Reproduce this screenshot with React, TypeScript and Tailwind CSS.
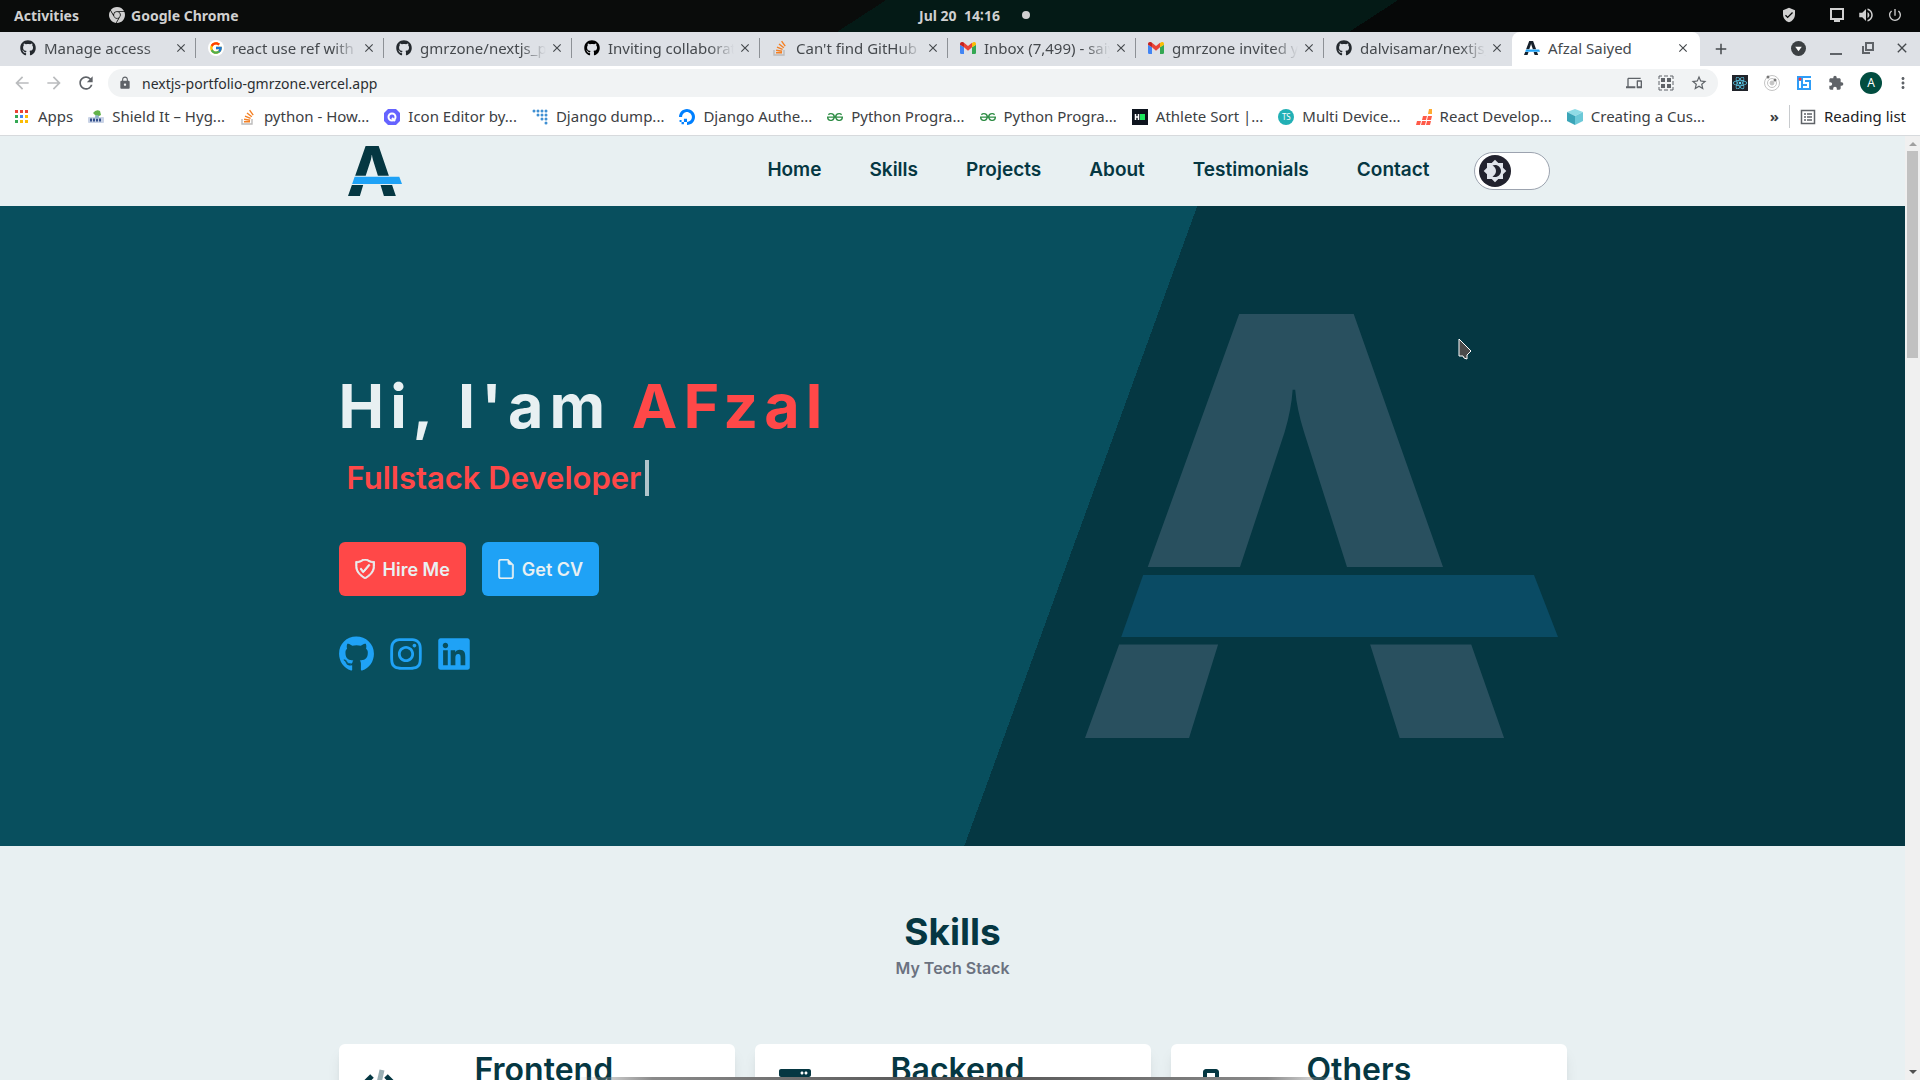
import React from "react";
import { FaGithub, FaInstagram, FaLinkedin, FaReact, FaServer, FaToolbox } from "react-icons/fa";
import { FcGoogle } from "react-icons/fc";
import { BsFileEarmark, BsGrid3X3GapFill } from "react-icons/bs";
import { VscWorkspaceTrusted } from "react-icons/vsc";
import { SiGooglechrome, SiDigitalocean, SiGeeksforgeeks } from "react-icons/si";
import {
  MdArrowBack, MdArrowForward, MdRefresh, MdLock, MdDevices, MdStarOutline, MdExtension, MdMoreVert,
  MdClose, MdAdd, MdVolumeUp, MdVerifiedUser, MdBrightness4, MdPowerSettingsNew,
} from "react-icons/md";

const ui = "[font-family:'Noto_Sans',sans-serif]";
const site = "[font-family:'Inter',sans-serif]";

function Logo({ className, ink, bar }: { className: string; ink: string; bar: string }) {
  return (
    <svg viewBox="346 270 1123 1007" preserveAspectRatio="none" className={className} aria-hidden="true">
      <path
        fill={ink}
        d="M712 270H984L1196 871H968L866 550Q849 497 845 450H839Q836 497 820 550L714 871H495ZM427 1055H662L593 1277H346ZM1023 1055H1263L1341 1277H1093Z"
      />
      <path fill={bar} d="M484 890H1412L1469 1037H432Z" />
    </svg>
  );
}

function Gmail() {
  return (
    <svg viewBox="0 0 24 18" className="w-4 h-3">
      <path fill="#4285f4" d="M2 18h4V8L0 4v12q0 2 2 2z" />
      <path fill="#34a853" d="M18 18h4q2 0 2-2V4l-6 4z" />
      <path fill="#fbbc04" d="M18 1v7l6-4V3c0-3-3-4-5-2z" />
      <path fill="#ea4335" d="M6 8V1l6 5 6-5v7l-6 5z" />
      <path fill="#c5221f" d="M0 3v1l6 4V1C4-1 0 0 0 3z" />
    </svg>
  );
}

function StackIcon() {
  return (
    <svg viewBox="0 0 16 16" className="size-4" fill="none">
      <path d="M2 10v5h10v-5" stroke="#bcbbbb" strokeWidth="1.4" />
      <path d="M4 12.8h6M4.1 10.3l6 .9M5 7.2l5.6 2.2M7 4l4.8 3.8M9.600 1.200l3.600 5" stroke="#f48024" strokeWidth="1.4" />
    </svg>
  );
}

const tabs: { title: string; icon: React.ReactNode }[] = [
  { title: "Manage access", icon: <FaGithub className="size-4 text-[#24292e]" /> },
  { title: "react use ref with map", icon: <span className="rounded-full bg-white p-px"><FcGoogle className="size-3.5" /></span> },
  { title: "gmrzone/nextjs_portfolio", icon: <FaGithub className="size-4 text-[#24292e]" /> },
  { title: "Inviting collaborators", icon: <FaGithub className="size-4 text-black" /> },
  { title: "Can't find GitHub in", icon: <StackIcon /> },
  { title: "Inbox (7,499) - saiyed", icon: <Gmail /> },
  { title: "gmrzone invited you", icon: <Gmail /> },
  { title: "dalvisamar/nextjs_port", icon: <FaGithub className="size-4 text-[#24292e]" /> },
];

const appColors = ["#ea4335", "#ea4335", "#ea4335", "#34a853", "#4285f4", "#fbbc04", "#34a853", "#fbbc04", "#fbbc04"];

const bookmarks: { title: string; icon: React.ReactNode }[] = [
  {
    title: "Apps",
    icon: (
      <svg viewBox="0 0 16 16" className="size-4">
        {appColors.map((c, i) => (
          <rect key={i} x={1 + (i % 3) * 5} y={1 + Math.floor(i / 3) * 5} width="3" height="3" fill={c} />
        ))}
      </svg>
    ),
  },
  {
    title: "Shield It – Hyg...",
    icon: (
      <svg viewBox="0 0 16 16" className="size-4">
        <rect y="8" width="16" height="6" rx="1" fill="#c9d3e6" />
        <path d="M2 11h12" stroke="#34508c" strokeWidth="3" strokeDasharray="2 1" />
        <path d="M5 4q3-4 7-2l1 4-4 2z" fill="#63b34a" />
        <circle cx="9" cy="8" r="2" fill="#8fb4c9" />
      </svg>
    ),
  },
  { title: "python - How...", icon: <StackIcon /> },
  {
    title: "Icon Editor by...",
    icon: (
      <svg viewBox="0 0 16 16" className="size-4">
        <path d="M4 0h8l4 4v8l-4 4H4l-4-4V4z" fill="#6563ff" />
        <circle cx="8" cy="8" r="3.500" fill="none" stroke="#fff" strokeWidth="2" />
        <path d="M8 9l3 3" stroke="#fff" strokeWidth="2" />
      </svg>
    ),
  },
  {
    title: "Django dump...",
    icon: (
      <svg viewBox="0 0 16 16" className="size-4" fill="#3f8fd2">
        {[[2, 2], [6, 2], [10, 2], [14, 2], [6, 6], [14, 6], [10, 6], [14, 10], [10, 10], [14, 14]].map(([x, y]) => (
          <circle key={`${x}-${y}`} cx={x} cy={y} r="1.500" />
        ))}
      </svg>
    ),
  },
  { title: "Django Authe...", icon: <SiDigitalocean className="size-4 text-[#0080ff]" /> },
  { title: "Python Progra...", icon: <SiGeeksforgeeks className="size-4 text-[#2f8d46]" /> },
  { title: "Python Progra...", icon: <SiGeeksforgeeks className="size-4 text-[#2f8d46]" /> },
  {
    title: "Athlete Sort |...",
    icon: (
      <svg viewBox="0 0 16 16" className="size-4">
        <rect width="16" height="16" fill="#0e141e" />
        <path d="M3.500 5v6M6.500 5v6M3 8h4" stroke="#fff" strokeWidth="1.500" />
        <rect x="8" y="5" width="5" height="6" fill="#1ee85e" />
      </svg>
    ),
  },
  {
    title: "Multi Device...",
    icon: <span className="flex size-4 items-center justify-center rounded-full bg-[#22b0b5] text-[8px] text-white">TS</span>,
  },
  {
    title: "React Develop...",
    icon: (
      <svg viewBox="0 0 16 16" className="size-4">
        <path fill="#ff5a48" d="M1 12h4l-1 4H0zM6 12h4l-1 4H5zM11 12h4l-1 4h-4zM7 7h4l-1 4H6zM12 7h4l-1 4h-4z" />
        <path fill="#ffab30" d="M13 0h3v5h-4z" />
      </svg>
    ),
  },
  {
    title: "Creating a Cus...",
    icon: (
      <svg viewBox="0 0 16 16" className="size-4">
        <path fill="#8fdce6" d="M8 0l8 3-8 4-8-4z" />
        <path fill="#3aa5b8" d="M0 3l8 4v9l-8-4z" />
        <path fill="#6cc9d8" d="M16 3L8 7v9l8-4z" />
      </svg>
    ),
  },
];

function SystemBar() {
  return (
    <header className="grid h-8 shrink-0 grid-cols-3 items-center bg-[linear-gradient(147deg,#0a0c0b_45%,#041a16_45%,#041a16_71%,#060808_71%)] pb-0.5 pl-3.5 pr-[17px] text-[14px] font-bold text-[#d0d0d0]">
      <div className="flex items-center gap-[30px]">
        <button type="button">Activities</button>
        <button type="button" className="flex items-center gap-1.5">
          <SiGooglechrome className="size-4" />
          Google Chrome
        </button>
      </div>
      <div className="flex items-center justify-center gap-[22px] pl-8">
        <span>Jul 20&nbsp; 14∶16</span>
        <span className="size-2 rounded-full bg-[#d0d0d0]" />
      </div>
      <div className="flex items-center justify-end gap-3">
        <MdVerifiedUser className="mr-5 size-4" />
        <svg viewBox="0 0 16 16" className="size-4">
          <path fill="none" stroke="currentColor" strokeWidth="2" d="M2 2h12v10H2z" />
          <path fill="currentColor" d="M5 12h6v3H5z" />
        </svg>
        <MdVolumeUp className="size-[18px]" />
        <MdPowerSettingsNew className="size-4" stroke="currentColor" />
      </div>
    </header>
  );
}

function TabStrip() {
  return (
    <div className="flex h-[34px] shrink-0 items-stretch bg-[#dee1e6] pl-2 text-[15px] text-[#45494d]">
      {tabs.map((tab, i) => (
        <div key={tab.title} className="flex min-w-0 max-w-[188px] flex-1 items-center pb-0.5 pl-3">
          <span className="flex w-4 shrink-0 justify-center">{tab.icon}</span>
          <span className="ml-2 min-w-0 flex-1 overflow-hidden whitespace-nowrap [mask-image:linear-gradient(to_right,black_80%,transparent)]">
            {tab.title}
          </span>
          <button type="button" aria-label={`Close ${tab.title}`} className="ml-1 mr-[7px]">
            <MdClose className="size-3.5" stroke="currentColor" />
          </button>
          <span className={i === tabs.length - 1 ? "w-px" : "h-5 w-px bg-[#8d9196]"} />
        </div>
      ))}
      <div className="flex min-w-0 max-w-[188px] flex-1 items-center rounded-t-lg bg-white pb-0.5 pl-3">
        <Logo className="h-3.5 w-4 shrink-0" ink="#16202b" bar="#1fa2f6" />
        <span className="ml-2 flex-1">Afzal Saiyed</span>
        <button type="button" aria-label="Close Afzal Saiyed" className="mr-2.5">
          <MdClose className="size-3.5" stroke="currentColor" />
        </button>
      </div>
      <button type="button" aria-label="New tab" className="px-3">
        <MdAdd className="size-[18px]" stroke="currentColor" />
      </button>
      <div className="ml-auto flex items-center gap-5 pb-0.5 pr-2.5">
        <svg viewBox="0 0 16 16" className="mr-1 size-[15px]">
          <circle cx="8" cy="8" r="8" fill="#3c4043" />
          <path d="M4.500 6h7L8 11z" fill="#fff" />
        </svg>
        <button type="button" aria-label="Minimize" className="flex h-3.5 w-3 items-end">
          <span className="h-0.5 w-full bg-[#5f6368]" />
        </button>
        <button type="button" aria-label="Restore">
          <svg viewBox="0 0 12 12" className="size-3" fill="none" stroke="#5f6368" strokeWidth="2">
            <path d="M4 1h7v7H4zM1 4v7h7" />
          </svg>
        </button>
        <button type="button" aria-label="Close window">
          <MdClose className="size-4" stroke="currentColor" />
        </button>
      </div>
    </div>
  );
}

function Toolbar() {
  return (
    <div className="flex h-9 shrink-0 items-center bg-white pb-0.5 pl-3 pr-3 text-[#5f6368]">
      <div className="flex w-24 items-center gap-3">
        <button type="button" aria-label="Back"><MdArrowBack className="size-5 text-[#babcbe]" /></button>
        <button type="button" aria-label="Forward"><MdArrowForward className="size-5 text-[#babcbe]" /></button>
        <button type="button" aria-label="Reload"><MdRefresh className="size-5" /></button>
      </div>
      <div className="flex h-7 flex-1 items-center rounded-full bg-[#f1f3f4] px-2.5">
        <MdLock className="size-3.5" />
        <input
          aria-label="Address"
          defaultValue="nextjs-portfolio-gmrzone.vercel.app"
          className="ml-2.5 flex-1 bg-transparent text-[14px] text-[#2b2e31] outline-none"
        />
        <div className="flex items-center gap-4">
          <MdDevices className="size-4" />
          <svg viewBox="0 0 16 16" className="size-4" fill="currentColor">
            <path d="M3 3h4v4H3zM9 3h4v4H9zM3 9h4v4H3zM9 9h4v4H9z" />
            <path fill="none" stroke="currentColor" d="M1 4V1h3M12 1h3v3M15 12v3h-3M4 15H1v-3M6 1h4M6 15h4M1 6v4M15 6v4" />
          </svg>
          <MdStarOutline className="size-[18px]" />
        </div>
      </div>
      <div className="ml-3.5 flex items-center gap-4">
        <FaReact className="size-4 bg-[#20232a] p-px text-[#61dafb]" />
        <svg viewBox="0 0 16 16" className="size-4" fill="none" stroke="#c4c4c4">
          <circle cx="8" cy="8" r="7.500" />
          <circle cx="8" cy="8" r="4.500" />
          <circle cx="8" cy="8" r="2" fill="#c4c4c4" />
          <circle cx="4" cy="2" r="1.500" fill="#777" stroke="none" />
          <circle cx="11" cy="5" r="1.500" fill="#777" stroke="none" />
        </svg>
        <svg viewBox="0 0 16 16" className="size-4">
          <rect x="1" y="1" width="14" height="14" fill="#2e9df7" />
          <path d="M3 6h2v7H3zM7 3h8v2H9v2h4v6H7v-2h4V9H7z" fill="#fff" />
          <circle cx="4" cy="4" r="1.500" fill="#f33" />
        </svg>
        <MdExtension className="size-4" />
        <button type="button" className="flex size-[22px] items-center justify-center rounded-full bg-[#014d40] text-[12px] text-white">A</button>
        <button type="button" aria-label="Menu" className="-mx-1"><MdMoreVert className="size-[18px]" /></button>
      </div>
    </div>
  );
}

function BookmarksBar() {
  return (
    <nav className="flex h-[34px] shrink-0 items-center border-b border-[#d7dadd] bg-white pb-1 pl-3.5 pr-3.5 text-[15px] text-[#3c4043]">
      <div className="flex min-w-0 items-center gap-[15px] overflow-hidden">
        {bookmarks.map((b, i) => (
          <a key={i} href="#bookmark" className="flex shrink-0 items-center gap-2 whitespace-nowrap">
            {b.icon}
            {b.title}
          </a>
        ))}
      </div>
      <div className="ml-auto flex items-center">
        <button type="button" aria-label="More bookmarks" className="mr-2.5 font-bold">»</button>
        <button type="button" className="flex items-center gap-2 border-l border-[#c8cbce] pl-2.5 text-[#202124]">
          <svg viewBox="0 0 16 16" className="size-4" fill="none" stroke="#5f6368" strokeWidth="1.500">
            <path d="M1.500 1.500h13v13h-13zM4 5h2M4 8h2M4 11h2M7 5h5M7 8h5M7 11h5" />
          </svg>
          Reading list
        </button>
      </div>
    </nav>
  );
}

const links = ["Home", "Skills", "Projects", "About", "Testimonials", "Contact"];

function SiteHeader() {
  return (
    <header className="h-[70px] bg-[#e8f0f2]">
      <div className="mx-auto flex h-full max-w-[1228px] items-center justify-between pl-[9px] pr-[17px]">
        <a href="#home" aria-label="Home"><Logo className="h-[50px] w-[54px]" ink="#053742" bar="#1fa2f6" /></a>
        <div className="flex items-center gap-11">
          <nav className="flex gap-12 pb-0.5 text-[19px] font-semibold text-[#053742]">
            {links.map((l) => (
              <a key={l} href={`#${l.toLowerCase()}`}>{l}</a>
            ))}
          </nav>
          <button type="button" role="switch" aria-checked="false" aria-label="Dark mode" className="flex h-[38px] w-[76px] items-center rounded-full border border-[#9ca3af] bg-white px-1">
            <span className="flex size-8 items-center justify-center rounded-full bg-[#22222e] text-[#e0e3ea]">
              <MdBrightness4 className="size-6" />
            </span>
          </button>
        </div>
      </div>
    </header>
  );
}

function Hero() {
  return (
    <section className="h-[640px] bg-[linear-gradient(110deg,#084f5e_56%,#053742_56%)]">
      <div className="mx-auto flex h-full max-w-[1228px] items-center justify-between">
        <div className="pb-2.5">
          <h1 className="text-[61px] font-bold leading-[72px] tracking-widest text-[#e8f0f2]">
            Hi, I'am <span className="text-[#ff4848]">AFzal</span>
          </h1>
          <p className="mt-3 flex h-12 items-center gap-1 pl-2 text-[31px] font-semibold text-[#ff4848]">
            Fullstack Developer
            <span className="h-9 w-1 bg-[#b0c4cb]" />
          </p>
          <div className="mt-10 flex gap-4 text-[18px] font-semibold text-[#e8f0f2]">
            <button type="button" className="flex h-[54px] items-center gap-2 rounded-md bg-[#ff4848] px-4">
              <VscWorkspaceTrusted className="size-5" strokeWidth="0.7" />
              Hire Me
            </button>
            <button type="button" className="flex h-[54px] items-center gap-2 rounded-md bg-[#1fa2f6] px-4">
              <BsFileEarmark className="-mx-0.5 size-5" strokeWidth="0.5" />
              Get CV
            </button>
          </div>
          <div className="mt-10 flex items-center gap-4 text-[#1fa2f6]">
            <a href="#github" aria-label="GitHub"><FaGithub className="h-9 w-[35px]" /></a>
            <a href="#instagram" aria-label="Instagram"><FaInstagram className="h-9 w-8" /></a>
            <a href="#linkedin" aria-label="LinkedIn"><FaLinkedin className="h-9 w-8" /></a>
          </div>
        </div>
        <Logo className="mr-[9px] h-[424px] w-[473px] shrink-0" ink="#29505f" bar="#0a4b64" />
      </div>
    </section>
  );
}

function CodeIcon() {
  return (
    <svg viewBox="0 0 32 28" className="h-8 w-8" fill="none" strokeWidth="5">
      <path d="M19 1l-6 26" stroke="#9bb0b5" />
      <path d="M9 7l-7 7 7 7M23 7l7 7-7 7" stroke="#053742" />
    </svg>
  );
}

const cards = [
  { title: "Frontend", icon: <CodeIcon /> },
  { title: "Backend", icon: <FaServer className="size-8" /> },
  { title: "Others", icon: <FaToolbox className="size-8" /> },
];

function Skills() {
  return (
    <section className="bg-[#e8f0f2] pt-16 text-[#053742]">
      <h2 className="text-center text-[37px] font-bold leading-[44px]">Skills</h2>
      <p className="pt-0.5 text-center text-[16px] font-semibold leading-6 text-[#6b7280]">My Tech Stack</p>
      <div className="mx-auto mt-16 grid max-w-[1228px] grid-cols-3 gap-5">
        {cards.map((c) => (
          <article key={c.title} className="flex h-64 items-start rounded-md bg-white shadow-lg">
            <div className="ml-6 mt-[23px] w-[112px] shrink-0">{c.icon}</div>
            <h3 className="mt-2 text-[32px] font-semibold leading-9">{c.title}</h3>
          </article>
        ))}
      </div>
    </section>
  );
}

function Cursor() {
  return (
    <svg viewBox="0 0 14 22" className="absolute left-[1458px] top-[338px] h-[22px] w-[14px]">
      <path d="M1 1v17h4l1 2 3 1V17l4-4z" fill="#4a4a4a" stroke="#fff" />
    </svg>
  );
}

export default function App() {
  return (
    <div className={`relative flex h-screen flex-col overflow-hidden bg-white ${ui}`}>
      <SystemBar />
      <TabStrip />
      <Toolbar />
      <BookmarksBar />
      <div className="flex min-h-0 flex-1">
        <main className={`min-w-0 flex-1 overflow-hidden ${site}`}>
          <SiteHeader />
          <Hero />
          <Skills />
        </main>
        <div className="flex w-[15px] flex-col items-center bg-[#f0f0f0] py-1.5">
          <span className="border-x-4 border-b-4 border-x-transparent border-b-[#a0a0a0]" />
          <span className="mt-[5px] h-[207px] w-[11px] bg-[#c1c1c1]" />
          <span className="mt-auto border-x-4 border-t-4 border-x-transparent border-t-[#505050]" />
        </div>
      </div>
      <Cursor />
      <div className="absolute bottom-0 left-[30%] right-[30%] h-[3px] bg-[linear-gradient(to_right,#b0b0b000,#8a8a8a_10%,#505050_50%,#8a8a8a_90%,#b0b0b000)]" />
    </div>
  );
}
